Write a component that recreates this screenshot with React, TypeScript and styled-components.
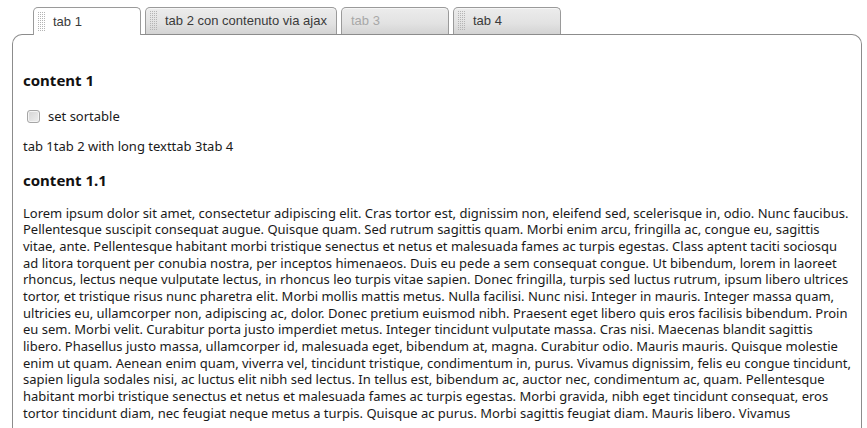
import * as React from "react";
import styled, { createGlobalStyle, css } from "styled-components";

const GlobalStyle = createGlobalStyle`
  html, body {
    margin: 0;
    padding: 0;
    background: #fff;
  }
  body {
    font-family: "Noto Sans", "Open Sans", sans-serif;
    overflow: hidden;
  }
`;

const tabs = [
  { label: "tab 1", width: 108, grip: true },
  { label: "tab 2 con contenuto via ajax", width: 192, grip: true },
  { label: "tab 3", width: 108, disabled: true },
  { label: "tab 4", width: 108, grip: true },
];

const lorem =
  "Lorem ipsum dolor sit amet, consectetur adipiscing elit. Cras tortor est, dignissim non, eleifend sed, scelerisque in, odio. Nunc faucibus. " +
  "Pellentesque suscipit consequat augue. Quisque quam. Sed rutrum sagittis quam. Morbi enim arcu, fringilla ac, congue eu, sagittis " +
  "vitae, ante. Pellentesque habitant morbi tristique senectus et netus et malesuada fames ac turpis egestas. Class aptent taciti sociosqu " +
  "ad litora torquent per conubia nostra, per inceptos himenaeos. Duis eu pede a sem consequat congue. Ut bibendum, lorem in laoreet " +
  "rhoncus, lectus neque vulputate lectus, in rhoncus leo turpis vitae sapien. Donec fringilla, turpis sed luctus rutrum, ipsum libero ultrices " +
  "tortor, et tristique risus nunc pharetra elit. Morbi mollis mattis metus. Nulla facilisi. Nunc nisi. Integer in mauris. Integer massa quam, " +
  "ultricies eu, ullamcorper non, adipiscing ac, dolor. Donec pretium euismod nibh. Praesent eget libero quis eros facilisis bibendum. Proin " +
  "eu sem. Morbi velit. Curabitur porta justo imperdiet metus. Integer tincidunt vulputate massa. Cras nisi. Maecenas blandit sagittis " +
  "libero. Phasellus justo massa, ullamcorper id, malesuada eget, bibendum at, magna. Curabitur odio. Mauris mauris. Quisque molestie " +
  "enim ut quam. Aenean enim quam, viverra vel, tincidunt tristique, condimentum in, purus. Vivamus dignissim, felis eu congue tincidunt, " +
  "sapien ligula sodales nisi, ac luctus elit nibh sed lectus. In tellus est, bibendum ac, auctor nec, condimentum ac, quam. Pellentesque " +
  "habitant morbi tristique senectus et netus et malesuada fames ac turpis egestas. Morbi gravida, nibh eget tincidunt consequat, eros " +
  "tortor tincidunt diam, nec feugiat neque metus a turpis. Quisque ac purus. Morbi sagittis feugiat diam. Mauris libero. Vivamus";

const App = () => {
  const [sortable, setSortable] = React.useState(false);
  const [current, setCurrent] = React.useState(0);

  return (
    <Page>
      <GlobalStyle />
      <TabBar>
        {tabs.map((t, i) => (
          <Tab
            key={t.label}
            $width={t.width}
            $active={current === i}
            $disabled={!!t.disabled}
            onClick={() => !t.disabled && setCurrent(i)}
          >
            {t.grip && <Grip />}
            <span>{t.label}</span>
          </Tab>
        ))}
      </TabBar>
      <Panel>
        <Heading $top={35}>content 1</Heading>
        <CheckRow>
          <Check
            type="checkbox"
            checked={sortable}
            onChange={() => setSortable(!sortable)}
          />
          set sortable
        </CheckRow>
        <Line>tab 1tab 2 with long texttab 3tab 4</Line>
        <Heading $top={14.5}>content 1.1</Heading>
        <Text>{lorem}</Text>
      </Panel>
    </Page>
  );
};
export default App;

const Page = styled.div`
  display: flex;
  flex-direction: column;
  height: 100vh;
  box-sizing: border-box;
  padding: 7px 5px 0 12px;
`;

const TabBar = styled.div`
  position: relative;
  z-index: 1;
  display: flex;
  align-items: flex-start;
  gap: 4px;
  flex: none;
  height: 27px;
  padding-left: 21px;
`;

const Tab = styled.div<{ $width: number; $active: boolean; $disabled: boolean }>`
  box-sizing: border-box;
  display: flex;
  align-items: center;
  gap: 8px;
  width: ${(p) => p.$width}px;
  height: ${(p) => (p.$active ? 28 : 27)}px;
  padding: 0 0 1px 3px;
  border: 1px solid #9a9a9a;
  border-bottom: none;
  border-radius: 5px 5px 0 0;
  font-family: "Liberation Sans", Arial, sans-serif;
  font-size: 13px;
  color: ${(p) => (p.$disabled ? "#a8a8a8" : "#3a3a3a")};
  cursor: ${(p) => (p.$disabled ? "default" : "pointer")};
  ${(p) =>
    p.$active
      ? css`
          background: #fff;
        `
      : css`
          background: linear-gradient(#ececec, #e2e2e2 60%, #d3d3d3);
          box-shadow: inset 0 1px 0 #f6f6f6;
        `}
  ${(p) =>
    p.$disabled &&
    css`
      padding-left: 9px;
    `}
`;

const Grip = styled.i`
  flex: none;
  width: 8px;
  height: 20px;
  margin-top: 1px;
  background: conic-gradient(#b4b4b4 25%, transparent 0) 0 0 / 2px 2px;
`;

const Panel = styled.div`
  flex: 1;
  box-sizing: border-box;
  padding: 0 9px 0 10px;
  border: 1px solid #8c8c8c;
  border-bottom: none;
  border-radius: 10px 10px 0 0;
  color: #1a1a1a;
  font-family: "Noto Sans", "Open Sans", sans-serif;
  font-size: 13px;
`;

const Heading = styled.h3<{ $top: number }>`
  margin: ${(p) => p.$top}px 0 0;
  font-size: 15px;
  font-weight: 700;
  line-height: 20px;
  color: #111;
`;

const CheckRow = styled.label`
  display: flex;
  align-items: center;
  gap: 8px;
  height: 20px;
  margin-top: 16px;
  line-height: 20px;
`;

const Check = styled.input`
  appearance: none;
  box-sizing: border-box;
  width: 13px;
  height: 13px;
  margin: 0 0 0 4px;
  border: 1px solid #a6a6a6;
  border-radius: 3px;
  background: linear-gradient(135deg, #d4d4d4, #efefef);
  box-shadow: inset 0 0 0 1px #f4f4f4;
  &:checked {
    background: #3b7ad9;
  }
`;

const Line = styled.p`
  margin: 12px 0 0;
  line-height: 17px;
`;

const Text = styled.p`
  margin: 15px 0 0;
  line-height: 16.67px;
`;
